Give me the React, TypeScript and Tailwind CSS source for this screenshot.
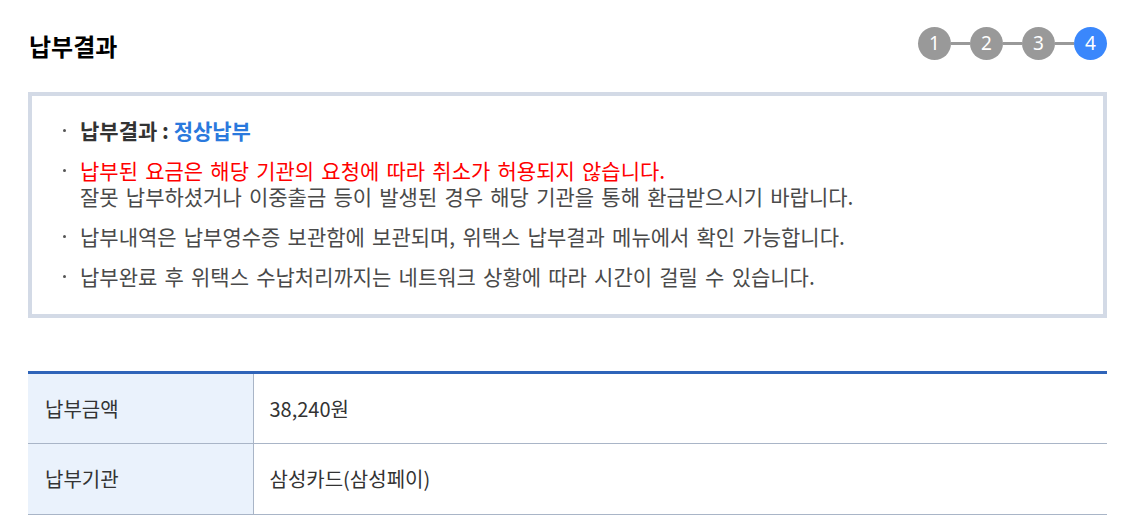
const KR = "font-['Noto_Sans_CJK_KR','Noto_Sans',sans-serif]"

const steps = [1, 2, 3, 4]
const current = 4

function StepBar() {
  return (
    <div className="flex items-center">
      {steps.map((n, i) => (
        <div key={n} className="flex items-center">
          {i > 0 && <div className="w-[19px] h-[3px] bg-[#999999]" />}
          <div
            className={
              "w-[33px] h-[33px] rounded-full flex items-center justify-center text-white text-[19px] font-['Noto_Sans',sans-serif] " +
              (n === current ? "bg-[#3a87fc]" : "bg-[#999999]")
            }
          >
            {n}
          </div>
        </div>
      ))}
    </div>
  )
}

function Bullet({ children }: { children: React.ReactNode }) {
  return (
    <li className="flex">
      <span className="w-[17px] shrink-0 h-[26px] flex items-center">
        <span className="w-[3px] h-[3px] bg-[#555] rounded-full" />
      </span>
      <div>{children}</div>
    </li>
  )
}

export default function App() {
  return (
    <div className={`${KR} bg-white w-[1126px] h-[517px] overflow-hidden pl-[28px]`}>
      <div className="w-[1079px]">
        <div className="flex justify-between items-center mt-[27px] h-[33px]">
          <h2 className="text-[24px] font-bold text-black pl-[1px] mt-[4px] leading-[30px]">납부결과</h2>
          <StepBar />
        </div>

        <div className="mt-[32px] border-4 border-[#d3dae6] pt-[21px] pb-[25px] pl-[31px]">
          <ul className="flex flex-col gap-[14px] text-[21px] leading-[26px] text-[#4a4a4a] [word-spacing:2.5px]">
            <Bullet>
              <span className="font-bold text-[#333] [word-spacing:0]">납부결과 : </span>
              <span className="font-bold text-[#2a79dd]">정상납부</span>
            </Bullet>
            <Bullet>
              <p className="text-[#ff0000]">납부된 요금은 해당 기관의 요청에 따라 취소가 허용되지 않습니다.</p>
              <p>잘못 납부하셨거나 이중출금 등이 발생된 경우 해당 기관을 통해 환급받으시기 바랍니다.</p>
            </Bullet>
            <Bullet>납부내역은 납부영수증 보관함에 보관되며, 위택스 납부결과 메뉴에서 확인 가능합니다.</Bullet>
            <Bullet>납부완료 후 위택스 수납처리까지는 네트워크 상황에 따라 시간이 걸릴 수 있습니다.</Bullet>
          </ul>
        </div>

        <table className="mt-[53px] w-full border-t-[3px] border-[#2f64b9] border-collapse text-[20px] text-[#333]">
          <tbody>
            <tr className="border-b border-[#a9b5c7] h-[71px]">
              <th className="w-[225px] bg-[#eaf2fc] border-r border-[#a9b5c7] text-left font-normal pl-[17px]">납부금액</th>
              <td className="pl-[16px]">38,240원</td>
            </tr>
            <tr className="border-b border-[#a9b5c7] h-[71px]">
              <th className="w-[225px] bg-[#eaf2fc] border-r border-[#a9b5c7] text-left font-normal pl-[17px]">납부기관</th>
              <td className="pl-[16px]">삼성카드(삼성페이)</td>
            </tr>
          </tbody>
        </table>
      </div>
    </div>
  )
}
